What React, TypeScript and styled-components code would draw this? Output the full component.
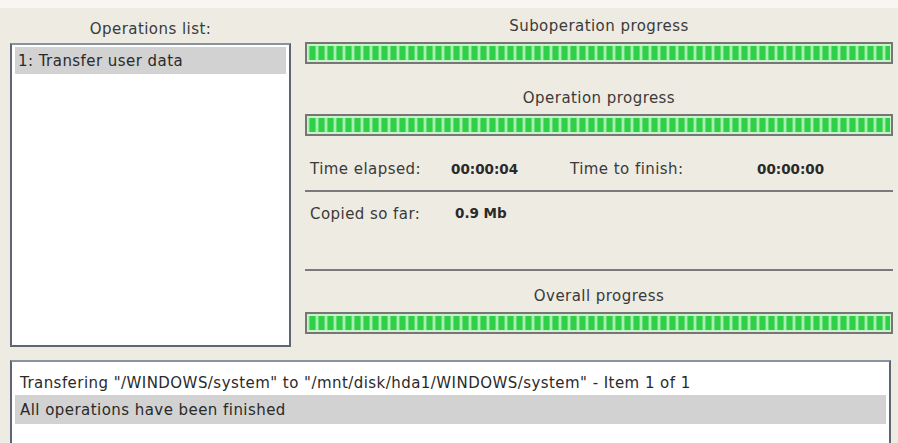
import styled, { createGlobalStyle } from 'styled-components'

const GlobalStyle = createGlobalStyle`
  html, body {
    margin: 0;
    padding: 0;
    background: #eeebe3;
    overflow: hidden;
  }
  body {
    font-family: 'DejaVu Sans', Verdana, sans-serif;
    color: #333;
  }
`

const Window = styled.div`
  width: 898px;
  height: 443px;
  background: #eeebe3;
  border-top: 8px solid #f7f6f2;
  box-sizing: border-box;
  padding: 0 0 0 10px;
  overflow: hidden;
`

const Top = styled.div`
  display: grid;
  grid-template-columns: 281px 588px;
  column-gap: 14px;
  align-items: start;
`

const Column = styled.div`
  display: flex;
  flex-direction: column;
`

const Label = styled.span`
  font-size: 15px;
  letter-spacing: 0.45px;
  color: #3a3a3a;
`

const Caption = styled(Label)<{ $h: number; $pad?: number }>`
  height: ${(p) => p.$h}px;
  box-sizing: border-box;
  padding-bottom: ${(p) => p.$pad ?? 7}px;
  display: flex;
  align-items: flex-end;
  justify-content: center;
`

const ListBox = styled.div`
  height: 304px;
  box-sizing: border-box;
  background: #fff;
  border: 2px solid #5d6672;
  border-top-color: #8893a0;
  padding: 2px 3px;
`

const ListItem = styled(Label)<{ $selected?: boolean }>`
  height: 27px;
  display: flex;
  align-items: center;
  padding-left: 3px;
  color: #2a2a2a;
  background: ${(p) => (p.$selected ? '#d2d2d2' : 'transparent')};
`

const Bar = styled.div`
  height: 22px;
  box-sizing: border-box;
  border: 2px solid #767676;
  background: #c9f4c9;
  padding: 2px 1px;
`

const BarFill = styled.div`
  height: 100%;
  background: repeating-linear-gradient(
    90deg,
    #d6fbd6 0px,
    #7fe48a 1px,
    #2fcf4a 2.5px,
    #2fcf4a 6.5px,
    #7fe48a 8px,
    #d6fbd6 9px
  );
`

const Stats = styled.div`
  display: grid;
  grid-template-columns: 141px 119px 187px 1fr;
  align-items: center;
  height: 42px;
  padding-left: 5px;
  margin-top: 12px;
`

const Value = styled.span`
  font-size: 13.5px;
  font-weight: bold;
  color: #2a2a2a;
`

const Divider = styled.div`
  height: 2px;
  background: #7a7a7a;
`

const CopiedRow = styled.div`
  height: 77px;
  display: grid;
  grid-template-columns: 145px 1fr;
  align-items: start;
  padding: 13px 0 0 5px;
  box-sizing: border-box;
`

const LogBox = styled.div`
  margin-top: 13px;
  width: 881px;
  height: 100px;
  box-sizing: border-box;
  background: #fff;
  border: 2px solid #5d6672;
  border-top-color: #8893a0;
  border-bottom: none;
  padding: 8px 3px 0;
`

const LogLine = styled(Label)<{ $selected?: boolean }>`
  height: ${(p) => (p.$selected ? 29 : 25)}px;
  display: flex;
  align-items: center;
  padding-left: 5px;
  color: #2a2a2a;
  background: ${(p) => (p.$selected ? '#d2d2d2' : 'transparent')};
`

function Progress() {
  return (
    <Bar>
      <BarFill />
    </Bar>
  )
}

export default function App() {
  return (
    <Window>
      <GlobalStyle />
      <Top>
        <Column>
          <Caption $h={35} $pad={5}>Operations list:</Caption>
          <ListBox>
            <ListItem $selected>1: Transfer user data</ListItem>
          </ListBox>
        </Column>
        <Column>
          <Caption $h={34}>Suboperation progress</Caption>
          <Progress />
          <Caption $h={50}>Operation progress</Caption>
          <Progress />
          <Stats>
            <Label>Time elapsed:</Label>
            <Value>00:00:04</Value>
            <Label>Time to finish:</Label>
            <Value>00:00:00</Value>
          </Stats>
          <Divider />
          <CopiedRow>
            <Label>Copied so far:</Label>
            <Value>0.9 Mb</Value>
          </CopiedRow>
          <Divider />
          <Caption $h={41}>Overall progress</Caption>
          <Progress />
        </Column>
      </Top>
      <LogBox>
        <LogLine>
          Transfering "/WINDOWS/system" to "/mnt/disk/hda1/WINDOWS/system" - Item 1 of 1
        </LogLine>
        <LogLine $selected>All operations have been finished</LogLine>
      </LogBox>
    </Window>
  )
}
